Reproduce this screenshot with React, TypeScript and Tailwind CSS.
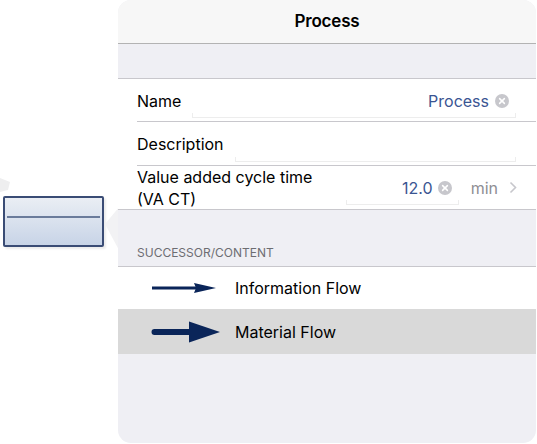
import React from "react";

const font = { fontFamily: "Inter, 'Liberation Sans', sans-serif" };

function ClearIcon() {
  return (
    <svg width="14" height="14" viewBox="0 0 14 14" className="shrink-0">
      <circle cx="7" cy="7" r="7" fill="#c7c7cc" />
      <path d="M4.6 4.6 L9.4 9.4 M9.4 4.6 L4.6 9.4" stroke="#ffffff" strokeWidth="1.5" strokeLinecap="round" />
    </svg>
  );
}

function FieldFrame() {
  return (
    <div className="absolute left-0 right-0 bottom-[4px] h-[5px] border-x border-b border-[#ededed]" />
  );
}

export default function App() {
  return (
    <div className="relative w-[537px] h-[444px] bg-white overflow-hidden text-black" style={font}>
      {/* canvas shapes */}
      <svg className="absolute left-0 top-[176px]" width="14" height="20" viewBox="0 0 14 20">
        <polygon points="0,2 10,6 8,14 0,16" fill="#eeeeef" />
      </svg>
      <div className="absolute left-[3px] top-[196px] w-[101px] h-[51px] rounded-[2px] border-2 border-[#3a4c75] bg-gradient-to-b from-[#eaeef4] to-[#c8d4e7] shadow-[2px_2px_2px_rgba(0,0,0,0.08)]">
        <div className="mt-[18px] mx-[2px] h-[2px] bg-[#6a7b9b]" />
      </div>
      <svg className="absolute left-[104px] top-[206px]" width="16" height="46" viewBox="0 0 16 46">
        <polygon points="1,18 16,0 16,46" fill="#f2f2f4" />
      </svg>

      {/* popover panel */}
      <div className="absolute left-[118px] top-0 w-[418px] h-[443px] rounded-[13px] overflow-hidden bg-[#efeff4] flex flex-col">
        <div className="h-[44px] shrink-0 bg-[#f7f7f7] border-b border-[#b3b3b3] flex items-center justify-center text-[17px] font-semibold tracking-[-0.2px]">
          Process
        </div>
        <div className="h-[35px] shrink-0 border-b border-[#c8c7cc]" />
        <div className="bg-white border-b border-[#c8c7cc]">
          {/* Name */}
          <div className="h-[43px] pl-[19px] pr-[20px] flex items-center relative">
            <span className="text-[16px]">Name</span>
            <div className="ml-auto w-[324px] h-full relative flex items-center justify-end gap-[6px] pr-[7px]">
              <span className="text-[16px] text-[#3a5592]">Process</span>
              <ClearIcon />
              <FieldFrame />
            </div>
            <div className="absolute left-[19px] right-0 bottom-0 h-px bg-[#c8c7cc]" />
          </div>
          {/* Description */}
          <div className="h-[44px] pl-[19px] pr-[20px] flex items-center relative">
            <span className="text-[16px]">Description</span>
            <div className="ml-auto w-[281px] h-full relative">
              <FieldFrame />
            </div>
            <div className="absolute left-[19px] right-0 bottom-0 h-px bg-[#c8c7cc]" />
          </div>
          {/* VA CT */}
          <div className="h-[43px] pl-[19px] pr-[19px] flex items-center">
            <div className="text-[16px] leading-[22px]">
              Value added cycle time
              <br />
              (VA CT)
            </div>
            <div className="ml-auto w-[113px] h-full relative flex items-center justify-end gap-[5px] pr-[7px]">
              <span className="text-[16px] text-[#3a5592]">12.0</span>
              <ClearIcon />
              <FieldFrame />
            </div>
            <span className="ml-[12px] text-[16px] text-[#8e8e93]">min</span>
            <svg className="ml-[11px]" width="8" height="13" viewBox="0 0 8 13">
              <path d="M1.5 1.5 L6.5 6.5 L1.5 11.5" fill="none" stroke="#c7c7cc" strokeWidth="1.6" />
            </svg>
          </div>
        </div>
        <div className="h-[57px] shrink-0 flex items-end pl-[19px] pb-[6px] text-[12px] leading-[14px] text-[#6d6d72] border-b border-[#c8c7cc]">
          SUCCESSOR/CONTENT
        </div>
        <div className="bg-white">
          <div className="h-[42px] flex items-center">
            <div className="w-[117px] flex items-center pl-[34px]">
              <svg width="64" height="12" viewBox="0 0 64 12">
                <rect x="0" y="4.5" width="46" height="3" fill="#0a2559" />
                <polygon points="42,1 64,6 42,11 44,6" fill="#0a2559" />
              </svg>
            </div>
            <span className="text-[16px]">Information Flow</span>
          </div>
          <div className="h-[45px] flex items-center bg-[#d9d9d9]">
            <div className="w-[117px] flex items-center pl-[33px]">
              <svg width="70" height="22" viewBox="0 0 70 22">
                <path d="M3.5 8 H40 V14 H3.5 A3 3 0 0 1 3.5 8 Z" fill="#0a2559" />
                <polygon points="38,0.5 69,11 38,21.5" fill="#0a2559" />
              </svg>
            </div>
            <span className="text-[16px]">Material Flow</span>
          </div>
        </div>
        <div className="flex-1" />
      </div>
    </div>
  );
}
